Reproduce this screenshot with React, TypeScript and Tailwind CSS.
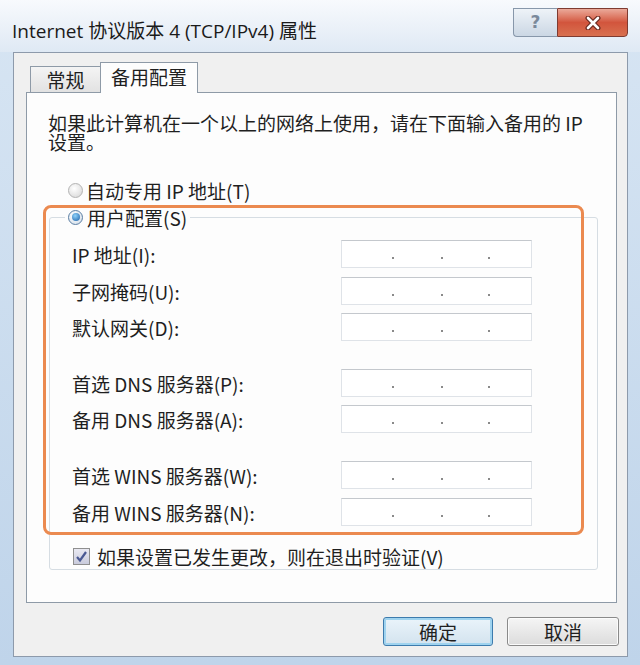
import type { ReactNode } from 'react'

interface FieldRow {
  label: string
  gap: string
}

const fieldRows: FieldRow[] = [
  { label: 'IP 地址(I):', gap: 'mt-[13px]' },
  { label: '子网掩码(U):', gap: 'mt-[9px]' },
  { label: '默认网关(D):', gap: 'mt-[8px]' },
  { label: '首选 DNS 服务器(P):', gap: 'mt-[28px]' },
  { label: '备用 DNS 服务器(A):', gap: 'mt-[8px]' },
  { label: '首选 WINS 服务器(W):', gap: 'mt-[28px]' },
  { label: '备用 WINS 服务器(N):', gap: 'mt-[9px]' },
]

function Radio({ checked }: { checked?: boolean }) {
  return (
    <span
      className={
        checked
          ? 'flex h-[15px] w-[15px] items-center justify-center rounded-full border border-[#5b7ea3] bg-[radial-gradient(circle_at_40%_35%,#ffffff,#cfdbe7)]'
          : 'flex h-[15px] w-[15px] items-center justify-center rounded-full border border-[#b3b3b3] bg-[radial-gradient(circle_at_40%_35%,#ffffff,#d4d4d4)]'
      }
    >
      {checked ? (
        <span className="h-[8px] w-[8px] rounded-full bg-[radial-gradient(circle_at_40%_35%,#8ed2fb,#1b5ea6)]" />
      ) : null}
    </span>
  )
}

function IpInput() {
  return (
    <div className="flex h-[28px] w-[191px] items-end border border-[#dfe3e8] border-t-[#c4c8cd] bg-white pb-[8px]">
      <span className="ml-[50px] h-[2px] w-[2px] bg-[#8a8a8a]" />
      <span className="ml-[47px] h-[2px] w-[2px] bg-[#8a8a8a]" />
      <span className="ml-[45px] h-[2px] w-[2px] bg-[#8a8a8a]" />
    </div>
  )
}

function DialogButton({ children, focused }: { children: ReactNode; focused?: boolean }) {
  return (
    <button
      type="button"
      className={
        focused
          ? 'h-[29px] w-[110px] rounded-[3px] border border-[#3d7bad] bg-linear-to-b from-[#eaf4fb] to-[#d3e3ee] text-[19px] leading-none text-[#1f1f1f] shadow-[inset_0_0_0_2px_#9fd3ef]'
          : 'h-[29px] w-[112px] rounded-[3px] border border-[#8a8a8a] bg-linear-to-b from-[#f5f5f5] to-[#dcdcdc] text-[19px] leading-none text-[#1f1f1f] shadow-[inset_0_0_0_1px_#fbfbfb]'
      }
    >
      {children}
    </button>
  )
}

export default function App() {
  return (
    <div className="relative h-[665px] w-[640px] overflow-hidden bg-linear-to-b from-[#d7e5f3] to-[#bfd4ea] font-['Noto_Sans_CJK_SC',sans-serif] text-[#1f1f1f]">
      {/* title bar */}
      <div className="flex h-[52px] items-start justify-between bg-linear-to-b from-[#f8fafd] to-[#dfe9f4] pl-[12px] pr-[12px]">
        <div className="pt-[18px] font-['Open_Sans','Noto_Sans_CJK_SC',sans-serif] text-[19px] leading-[26px] text-[#1a1a1a]">
          Internet 协议版本 4 (TCP/IPv4) 属性
        </div>
        <div className="mt-[8px] flex h-[29px]">
          <div className="flex w-[44px] items-center justify-center rounded-bl-[4px] border border-r-0 border-[#8797aa] bg-linear-to-b from-[#eef3f8] to-[#cbd7e4] font-['DejaVu_Sans',sans-serif] text-[17px] font-bold text-[#7a899b]">
            ?
          </div>
          <div className="flex w-[71px] items-center justify-center rounded-br-[4px] border border-[#7e3b31] bg-linear-to-b from-[#eaa99a] via-[#d2553d] to-[#d8704f]">
            <svg width="16" height="14" viewBox="0 0 16 14">
              <path d="M3 2 L13 12 M13 2 L3 12" stroke="#6b2a20" strokeWidth="5" strokeLinecap="round" />
              <path d="M3 2 L13 12 M13 2 L3 12" stroke="#ffffff" strokeWidth="2.6" strokeLinecap="round" />
            </svg>
          </div>
        </div>
      </div>

      {/* window body */}
      <div className="pb-[8px] pl-[13px] pr-[12px]">
        <div className="h-[605px] border border-[#8d9aab] bg-[#f0f0f0] pl-[12px] pr-[10px] pt-[9px]">
          <div className="flex h-[30px] items-end pl-[4px]">
            <div className="flex h-[26px] w-[70px] items-center justify-center border-l border-t border-[#8e9aa7] bg-linear-to-b from-[#f4f4f4] to-[#e2e2e2] text-[19px] leading-none">
              常规
            </div>
            <div className="relative z-10 mb-[-1px] flex h-[31px] w-[98px] items-start justify-center border border-b-0 border-[#8e9aa7] bg-[#fdfdfd] pt-[4px] text-[19px] leading-[20px]">
              备用配置
            </div>
          </div>

          <div className="h-[511px] border border-[#8e9aa7] bg-[#fdfdfd] pl-[21px] pt-[20px]">
            <p className="text-[19px] leading-[19px]">
              如果此计算机在一个以上的网络上使用，请在下面输入备用的 IP
              <br />
              设置。
            </p>

            <label className="ml-[20px] mt-[29px] flex h-[20px] items-center gap-[3px] text-[19px] leading-none">
              <Radio />
              自动专用 IP 地址(T)
            </label>

            <fieldset className="ml-[1px] mt-[7px] w-[549px] rounded-[3px] border border-[#d6dde3] pb-[3px]">
              <legend className="ml-[15px] px-[3px]">
                <span className="flex h-[20px] items-center gap-[4px] text-[19px] leading-none">
                  <Radio checked />
                  用户配置(S)
                </span>
              </legend>

              {fieldRows.map((row) => (
                <div key={row.label} className={`${row.gap} flex h-[28px] items-center pl-[22px]`}>
                  <span className="w-[269px] text-[19px] leading-none">{row.label}</span>
                  <IpInput />
                </div>
              ))}

              <label className="ml-[23px] mt-[20px] flex h-[20px] items-center gap-[7px] text-[19px] leading-none">
                <span className="flex h-[17px] w-[17px] items-center justify-center border border-[#8f8f8f] bg-linear-to-b from-[#e9e9f2] to-[#c9cbdc]">
                  <svg width="13" height="13" viewBox="0 0 13 13">
                    <path d="M2 7 L5 10.5 L11 2" fill="none" stroke="#4a5993" strokeWidth="2.2" />
                  </svg>
                </span>
                如果设置已发生更改，则在退出时验证(V)
              </label>
            </fieldset>
          </div>

          <div className="mr-[-2px] mt-[14px] flex justify-end gap-[14px]">
            <DialogButton focused>确定</DialogButton>
            <DialogButton>取消</DialogButton>
          </div>
        </div>
      </div>

      {/* highlight frame around the manual settings */}
      <div className="pointer-events-none absolute left-[43px] top-[205px] h-[330px] w-[541px] rounded-[8px] border-[3px] border-[#eb8a50]" />
    </div>
  )
}
